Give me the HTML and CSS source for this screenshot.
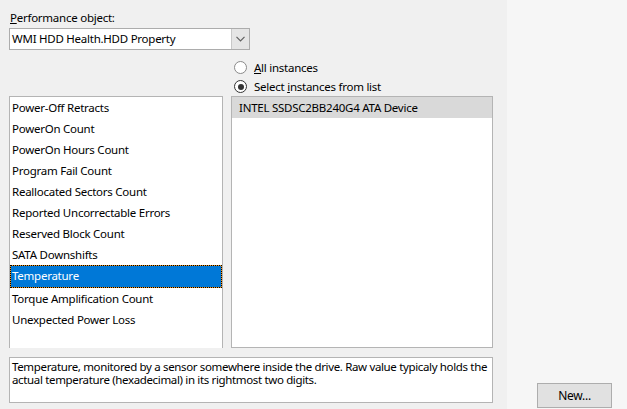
FILE: index.html
```html
<!DOCTYPE html>
<html>
<head>
    <link rel="stylesheet" href="styles.css">
</head>
<body>
    <div class="page">
        <div class="main">
            <label class="field_label"><u>P</u>erformance object:</label>
            <div class="combo">
                <span class="combo_text">WMI HDD Health.HDD Property</span>
                <span class="combo_btn">
                    <svg width="9" height="6" viewBox="0 0 9 6"><path d="M0.5 0.8 L4.5 4.8 L8.5 0.8" fill="none" stroke="#606060" stroke-width="1.2"/></svg>
                </span>
            </div>

            <div class="lists">
                <div class="counters">
                    <div class="item">Power-Off Retracts</div>
                    <div class="item">PowerOn Count</div>
                    <div class="item">PowerOn Hours Count</div>
                    <div class="item">Program Fail Count</div>
                    <div class="item">Reallocated Sectors Count</div>
                    <div class="item">Reported Uncorrectable Errors</div>
                    <div class="item">Reserved Block Count</div>
                    <div class="item">SATA Downshifts</div>
                    <div class="item selected">Temperature</div>
                    <div class="item">Torque Amplification Count</div>
                    <div class="item">Unexpected Power Loss</div>
                </div>
                <div class="instances_col">
                    <div class="radio_row"><span class="radio"></span><span><u>A</u>ll instances</span></div>
                    <div class="radio_row"><span class="radio checked"></span><span>Select <u>i</u>nstances from list</span></div>
                    <div class="instances">
                        <div class="item inactive">INTEL SSDSC2BB240G4 ATA Device</div>
                    </div>
                </div>
            </div>

            <div class="description">Temperature, monitored by a sensor somewhere inside the drive. Raw value typicaly holds the actual temperature (hexadecimal) in its rightmost two digits.</div>
        </div>
        <div class="side">
            <button class="new_btn">New...</button>
        </div>
    </div>
</body>
</html>
```

FILE: styles.css
```css
/* Base */
body {
    margin: 0;
    background-color: #f0f0f0;
    font-family: "Noto Sans", "Open Sans", sans-serif;
    font-size: 11.5px;
    letter-spacing: -0.25px;
    color: #000;
}

.page {
    display: flex;
    height: 409px;
    overflow: hidden;
}

/* Left part of the dialog */
.main {
    width: 498px;
    padding: 11px 0 0 9px;
    display: flex;
    flex-direction: column;
}

.field_label {
    padding-left: 1px;
    line-height: 14px;
    height: 17px;
}

.combo {
    display: flex;
    width: 241px;
    height: 22px;
    box-sizing: border-box;
    border: 1px solid #acacac;
    background-color: #fff;
}

.combo_text {
    flex: 1;
    padding-left: 2px;
    line-height: 20px;
}

.combo_btn {
    width: 17px;
    background-color: #e5e5e5;
    border-left: 1px solid #c8c8c8;
    display: flex;
    align-items: center;
    justify-content: center;
}

/* Two lists side by side */
.lists {
    display: flex;
    align-items: flex-end;
    gap: 8px;
    margin-top: 8px;
}

.counters {
    width: 214px;
    height: 252px;
    box-sizing: border-box;
    border: 1px solid #b4b4b4;
    border-bottom: none;
    background-color: #fff;
}

.item {
    height: 21px;
    line-height: 21px;
    padding-left: 2px;
    white-space: nowrap;
}

.item.selected {
    color: #fff;
    border: 1px dotted #000;
    line-height: 19px;
    padding-left: 1px;
    background: linear-gradient(#0078d7, #0078d7) padding-box, linear-gradient(#f0941c, #f0941c) border-box;
}

.item.inactive {
    background-color: #d9d9d9;
    padding-left: 7px;
}

.instances_col {
    display: flex;
    flex-direction: column;
}

.radio_row {
    display: flex;
    align-items: center;
    height: 19px;
    padding-left: 3px;
}

.radio {
    width: 11px;
    height: 11px;
    border: 1px solid #8a8a8a;
    border-radius: 50%;
    background-color: #fff;
    margin-right: 7px;
    display: flex;
    align-items: center;
    justify-content: center;
}

.radio.checked {
    border-color: #333;
}

.radio.checked::after {
    content: "";
    width: 6px;
    height: 6px;
    border-radius: 50%;
    background-color: #333;
}

.instances {
    width: 262px;
    height: 252px;
    box-sizing: border-box;
    border: 1px solid #b4b4b4;
    background-color: #fff;
}

.description {
    margin-top: 9px;
    width: 484px;
    height: 46px;
    box-sizing: border-box;
    border: 1px solid #b4b4b4;
    background-color: #fff;
    padding: 2px 0 1px 2px;
    line-height: 13px;
    letter-spacing: -0.35px;
}

/* Right strip with the button */
.side {
    flex: 1;
    background-color: #f6f6f6;
    display: flex;
    align-items: flex-end;
    padding-left: 30px;
}

.new_btn {
    width: 75px;
    height: 25px;
    margin-bottom: 1px;
    border: 1px solid #adadad;
    background-color: #e1e1e1;
    font-family: inherit;
    font-size: 12px;
    letter-spacing: inherit;
    color: #000;
}
```
